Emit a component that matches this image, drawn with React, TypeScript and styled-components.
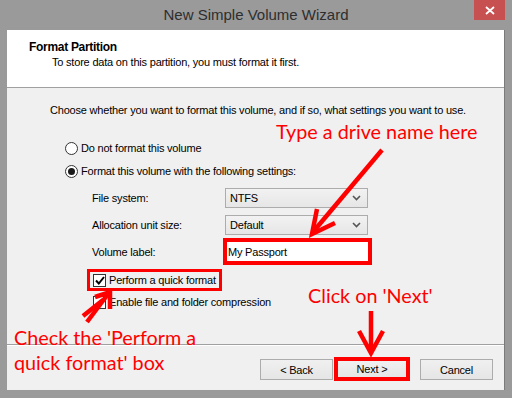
import React from 'react';
import styled, { createGlobalStyle } from 'styled-components';

const GlobalStyle = createGlobalStyle`
  html, body {
    margin: 0;
    padding: 0;
    background: #9a9a9a;
  }
  body {
    font-family: 'Liberation Sans', Arial, sans-serif;
    font-size: 11px;
    letter-spacing: -0.2px;
    color: #000;
  }
`;

const Window = styled.div`
  position: relative;
  width: 512px;
  height: 398px;
  background: #9a9a9a;
  display: flex;
  flex-direction: column;
  overflow: hidden;
`;

const TitleBar = styled.div`
  height: 30px;
  display: grid;
  grid-template-columns: 1fr auto 1fr;
  align-items: start;
`;

const Title = styled.div`
  grid-column: 2;
  font-size: 15px;
  letter-spacing: 0;
  line-height: 30px;
  color: #2e2e2e;
`;

const CloseButton = styled.div`
  grid-column: 3;
  justify-self: end;
  margin-right: 7px;
  width: 31px;
  height: 20px;
  background: #c75050;
  display: flex;
  align-items: center;
  justify-content: center;
`;

const Client = styled.div`
  margin: 0 8px 0 7px;
  height: 360px;
  background: #f0f0f0;
  display: flex;
  flex-direction: column;
  box-shadow: 1px 0 0 #7a7a7a;
`;

const Header = styled.div`
  height: 58px;
  background: #fff;
  border-bottom: 1px solid #a0a0a0;
  padding: 10px 0 0 22px;
  box-sizing: border-box;
`;

const HeaderTitle = styled.div`
  font-weight: bold;
  font-size: 12px;
  letter-spacing: -0.3px;
  line-height: 14px;
`;

const HeaderSub = styled.div`
  padding-left: 23px;
  line-height: 14px;
  margin-top: 1px;
`;

const Body = styled.div`
  flex: 1;
  padding-left: 43px;
  display: flex;
  flex-direction: column;
`;

const Intro = styled.div`
  margin-top: 15px;
  line-height: 14px;
  white-space: nowrap;
`;

const OptionRow = styled.label<{ $top: number }>`
  margin-top: ${p => p.$top}px;
  margin-left: 15px;
  height: 16px;
  display: flex;
  align-items: center;
  gap: 3px;
`;

const Radio = styled.span<{ $checked?: boolean }>`
  width: 11px;
  height: 11px;
  border-radius: 50%;
  border: 1px solid #333;
  background: #fff;
  display: flex;
  align-items: center;
  justify-content: center;
  &::after {
    content: '';
    width: 7px;
    height: 7px;
    border-radius: 50%;
    background: ${p => (p.$checked ? '#1a1a1a' : 'transparent')};
  }
`;

const SettingRow = styled.div<{ $top: number; $h: number }>`
  margin-top: ${p => p.$top}px;
  height: ${p => p.$h}px;
  display: grid;
  grid-template-columns: 133px auto;
  align-items: center;
  padding-left: 42px;
`;

const Combo = styled.div`
  width: 143px;
  height: 20px;
  box-sizing: border-box;
  border: 1px solid #acacac;
  background: linear-gradient(#f2f2f2, #e6e6e6);
  display: flex;
  align-items: center;
  justify-content: space-between;
  padding: 0 6px 0 4px;
`;

const TextBox = styled.div`
  margin-left: -2px;
  width: 149px;
  height: 27px;
  box-sizing: border-box;
  border: 4px solid #ff0000;
  background: #fff;
  display: flex;
  align-items: center;
  padding-left: 1px;
`;

const CheckRow = styled.div<{ $top: number; $boxed?: boolean }>`
  margin-top: ${p => p.$top}px;
  margin-left: ${p => (p.$boxed ? 37 : 43)}px;
  align-self: flex-start;
  display: flex;
  align-items: center;
  gap: 3px;
  box-sizing: border-box;
  height: ${p => (p.$boxed ? 22 : 14)}px;
  padding: ${p => (p.$boxed ? '0 3px 0 3px' : '0')};
  border: ${p => (p.$boxed ? '3px solid #ff0000' : 'none')};
`;

const CheckBox = styled.span`
  width: 13px;
  height: 13px;
  box-sizing: border-box;
  border: 1px solid #333;
  background: #fff;
  display: flex;
  align-items: center;
  justify-content: center;
`;

const Footer = styled.div`
  height: 46px;
  border-top: 1px solid #a0a0a0;
  box-shadow: inset 0 1px 0 #fff;
  display: flex;
  align-items: flex-start;
  padding: 14px 0 0 253px;
  box-sizing: border-box;
`;

const Button = styled.div<{ $boxed?: boolean }>`
  width: ${p => (p.$boxed ? 76 : 73)}px;
  height: ${p => (p.$boxed ? 24 : 21)}px;
  margin: ${p => (p.$boxed ? '-2px 10px 0 1px' : '0')};
  box-sizing: border-box;
  border: ${p => (p.$boxed ? '4px solid #ff0000' : '1px solid #acacac')};
  background: linear-gradient(#f0f0f0, #e5e5e5);
  display: flex;
  align-items: center;
  justify-content: center;
`;

const Overlay = styled.svg`
  position: absolute;
  left: 0;
  top: 0;
  pointer-events: none;
`;

const Note = styled.div<{ $x: number; $y: number }>`
  position: absolute;
  left: ${p => p.$x}px;
  top: ${p => p.$y}px;
  font-family: Lato, 'Open Sans', sans-serif;
  font-size: 19.8px;
  letter-spacing: 0;
  line-height: 25px;
  color: #ff0000;
  white-space: nowrap;
`;

const Chevron = () => (
  <svg width="9" height="6" viewBox="0 0 9 6">
    <path d="M1 1 L4.5 4.5 L8 1" stroke="#555" strokeWidth="1.6" fill="none" />
  </svg>
);

export default function App() {
  return (
    <>
      <GlobalStyle />
      <Window>
        <TitleBar>
          <Title>New Simple Volume Wizard</Title>
          <CloseButton>
            <svg width="10" height="9" viewBox="0 0 10 9">
              <path d="M1 1 L9 8 M9 1 L1 8" stroke="#fff" strokeWidth="1.8" />
            </svg>
          </CloseButton>
        </TitleBar>
        <Client>
          <Header>
            <HeaderTitle>Format Partition</HeaderTitle>
            <HeaderSub>To store data on this partition, you must format it first.</HeaderSub>
          </Header>
          <Body>
            <Intro>Choose whether you want to format this volume, and if so, what settings you want to use.</Intro>
            <OptionRow $top={23}>
              <Radio />
              Do not format this volume
            </OptionRow>
            <OptionRow $top={7}>
              <Radio $checked />
              Format this volume with the following settings:
            </OptionRow>
            <SettingRow $top={9} $h={20}>
              <span>File system:</span>
              <Combo>NTFS<Chevron /></Combo>
            </SettingRow>
            <SettingRow $top={7} $h={20}>
              <span>Allocation unit size:</span>
              <Combo>Default<Chevron /></Combo>
            </SettingRow>
            <SettingRow $top={3} $h={27}>
              <span>Volume label:</span>
              <TextBox>My Passport</TextBox>
            </SettingRow>
            <CheckRow $top={4} $boxed>
              <CheckBox>
                <svg width="10" height="9" viewBox="0 0 10 9">
                  <path d="M1 4.5 L3.8 7.5 L9 1" stroke="#000" strokeWidth="2" fill="none" />
                </svg>
              </CheckBox>
              Perform a quick format
            </CheckRow>
            <CheckRow $top={4}>
              <CheckBox />
              Enable file and folder compression
            </CheckRow>
          </Body>
          <Footer>
            <Button>&lt; Back</Button>
            <Button $boxed>Next &gt;</Button>
            <Button>Cancel</Button>
          </Footer>
        </Client>

        <Overlay width="512" height="398" viewBox="0 0 512 398">
          <g stroke="#ff0000" strokeWidth="4.5" strokeLinecap="butt" fill="none">
            <path d="M382 150 L313 232" />
            <path d="M317 209 L312 234 L335 223" strokeLinejoin="miter" />
            <path d="M371 311 L371 351" />
            <path d="M359 331 L371 353 L383 331" strokeLinejoin="miter" />
            <path d="M87 322 L108 294" />
            <path d="M95 297 L110 292 L110 309" strokeLinejoin="miter" />
            <path d="M83 316 L103 300" />
          </g>
        </Overlay>
        <Note $x={276} $y={119}>Type a drive name here</Note>
        <Note $x={308} $y={283}>Click on 'Next'</Note>
        <Note $x={14} $y={325}>Check the 'Perform a</Note>
        <Note $x={14} $y={350}>quick format' box</Note>
      </Window>
    </>
  );
}
